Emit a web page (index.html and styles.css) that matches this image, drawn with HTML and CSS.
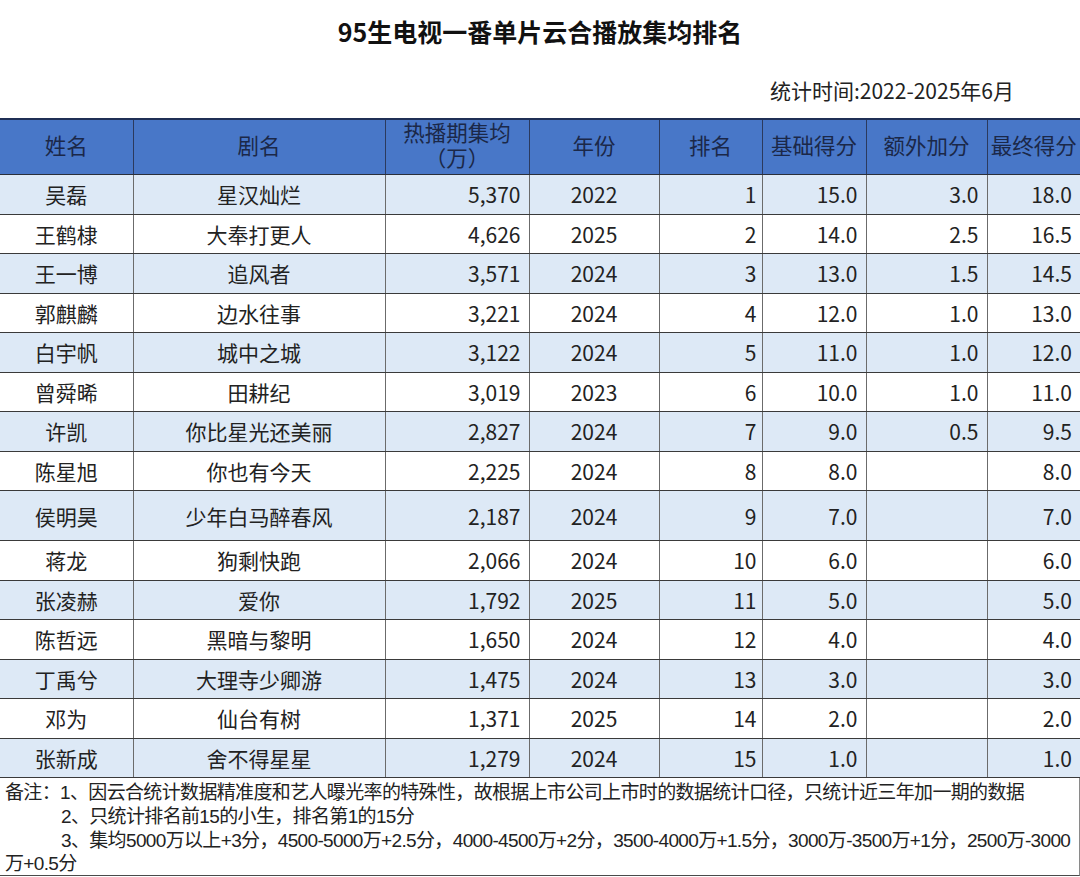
FILE: index.html
```html
<!DOCTYPE html>
<html lang="zh-CN">
<head>
<meta charset="utf-8">
<title>95生电视一番单片云合播放集均排名</title>
<link rel="stylesheet" href="styles.css">
</head>
<body>
<div class="page">
  <h1 class="title">95生电视一番单片云合播放集均排名</h1>
  <div class="period">统计时间:2022-2025年6月</div>
  <table class="rank">
    <colgroup>
      <col class="c-name"><col class="c-drama"><col class="c-avg"><col class="c-year">
      <col class="c-rank"><col class="c-base"><col class="c-extra"><col class="c-final">
    </colgroup>
    <thead>
      <tr>
        <th>姓名</th><th>剧名</th><th><span class="hl">热播期集均</span><span class="hl">（万）</span></th><th>年份</th>
        <th>排名</th><th>基础得分</th><th>额外加分</th><th>最终得分</th>
      </tr>
    </thead>
    <tbody>
      <tr class="alt"><td class="ctr">吴磊</td><td class="ctr">星汉灿烂</td><td class="num">5,370</td><td class="ctr">2022</td><td class="num rk">1</td><td class="num">15.0</td><td class="num">3.0</td><td class="num">18.0</td></tr>
      <tr><td class="ctr">王鹤棣</td><td class="ctr">大奉打更人</td><td class="num">4,626</td><td class="ctr">2025</td><td class="num rk">2</td><td class="num">14.0</td><td class="num">2.5</td><td class="num">16.5</td></tr>
      <tr class="alt"><td class="ctr">王一博</td><td class="ctr">追风者</td><td class="num">3,571</td><td class="ctr">2024</td><td class="num rk">3</td><td class="num">13.0</td><td class="num">1.5</td><td class="num">14.5</td></tr>
      <tr><td class="ctr">郭麒麟</td><td class="ctr">边水往事</td><td class="num">3,221</td><td class="ctr">2024</td><td class="num rk">4</td><td class="num">12.0</td><td class="num">1.0</td><td class="num">13.0</td></tr>
      <tr class="alt"><td class="ctr">白宇帆</td><td class="ctr">城中之城</td><td class="num">3,122</td><td class="ctr">2024</td><td class="num rk">5</td><td class="num">11.0</td><td class="num">1.0</td><td class="num">12.0</td></tr>
      <tr><td class="ctr">曾舜晞</td><td class="ctr">田耕纪</td><td class="num">3,019</td><td class="ctr">2023</td><td class="num rk">6</td><td class="num">10.0</td><td class="num">1.0</td><td class="num">11.0</td></tr>
      <tr class="alt"><td class="ctr">许凯</td><td class="ctr">你比星光还美丽</td><td class="num">2,827</td><td class="ctr">2024</td><td class="num rk">7</td><td class="num">9.0</td><td class="num">0.5</td><td class="num">9.5</td></tr>
      <tr><td class="ctr">陈星旭</td><td class="ctr">你也有今天</td><td class="num">2,225</td><td class="ctr">2024</td><td class="num rk">8</td><td class="num">8.0</td><td class="num"></td><td class="num">8.0</td></tr>
      <tr class="alt tall"><td class="ctr">侯明昊</td><td class="ctr">少年白马醉春风</td><td class="num">2,187</td><td class="ctr">2024</td><td class="num rk">9</td><td class="num">7.0</td><td class="num"></td><td class="num">7.0</td></tr>
      <tr><td class="ctr">蒋龙</td><td class="ctr">狗剩快跑</td><td class="num">2,066</td><td class="ctr">2024</td><td class="num rk">10</td><td class="num">6.0</td><td class="num"></td><td class="num">6.0</td></tr>
      <tr class="alt"><td class="ctr">张凌赫</td><td class="ctr">爱你</td><td class="num">1,792</td><td class="ctr">2025</td><td class="num rk">11</td><td class="num">5.0</td><td class="num"></td><td class="num">5.0</td></tr>
      <tr><td class="ctr">陈哲远</td><td class="ctr">黑暗与黎明</td><td class="num">1,650</td><td class="ctr">2024</td><td class="num rk">12</td><td class="num">4.0</td><td class="num"></td><td class="num">4.0</td></tr>
      <tr class="alt"><td class="ctr">丁禹兮</td><td class="ctr">大理寺少卿游</td><td class="num">1,475</td><td class="ctr">2024</td><td class="num rk">13</td><td class="num">3.0</td><td class="num"></td><td class="num">3.0</td></tr>
      <tr><td class="ctr">邓为</td><td class="ctr">仙台有树</td><td class="num">1,371</td><td class="ctr">2025</td><td class="num rk">14</td><td class="num">2.0</td><td class="num"></td><td class="num">2.0</td></tr>
      <tr class="alt"><td class="ctr">张新成</td><td class="ctr">舍不得星星</td><td class="num">1,279</td><td class="ctr">2024</td><td class="num rk">15</td><td class="num">1.0</td><td class="num"></td><td class="num">1.0</td></tr>
    </tbody>
  </table>
  <div class="notes">
    <p class="note-first">备注：1、因云合统计数据精准度和艺人曝光率的特殊性，故根据上市公司上市时的数据统计口径，只统计近三年加一期的数据</p>
    <p class="note-indent">2、只统计排名前15的小生，排名第1的15分</p>
    <p class="note-indent">3、集均5000万以上+3分，4500-5000万+2.5分，4000-4500万+2分，3500-4000万+1.5分，3000万-3500万+1分，2500万-3000</p>
    <p class="note-wrap">万+0.5分</p>
  </div>
</div>
</body>
</html>
```
FILE: styles.css
```css
html, body {
  margin: 0;
  padding: 0;
  background: #ffffff;
}

body {
  font-family: "Noto Sans CJK SC", "Liberation Sans", sans-serif;
  color: #1e1e1e;
}

.page {
  width: 1080px;
  height: 877px;
  overflow: hidden;
}

.title {
  margin: 0;
  height: 64px;
  line-height: 62px;
  text-align: center;
  font-size: 25px;
  font-weight: 700;
  color: #111111;
}

.period {
  height: 54px;
  line-height: 52px;
  text-align: right;
  padding-right: 66px;
  font-size: 21px;
  color: #222222;
}

.rank {
  width: 1080px;
  table-layout: fixed;
  border-collapse: collapse;
  font-size: 21px;
}

.c-name { width: 133px; }
.c-drama { width: 252px; }
.c-avg { width: 144px; }
.c-year { width: 130px; }
.c-rank { width: 103px; }
.c-base { width: 104px; }
.c-extra { width: 121px; }
.c-final { width: 93px; }

.rank th {
  background: #4877c8;
  color: #1b2848;
  font-family: "Liberation Sans", "Noto Sans CJK SC", sans-serif;
  font-weight: 400;
  font-size: 21.5px;
  line-height: 25px;
  height: 54px;
  padding: 0 2px;
  text-align: center;
  border-top: 2px solid #1f2f55;
  border-bottom: 1.5px solid #2a2f3a;
  border-left: 1.5px solid #2b3a5e;
  border-right: 1.5px solid #2b3a5e;
}

.hl {
  display: block;
}

.rank th:first-child { border-left: none; }
.rank th:last-child { border-right: none; }

.rank td {
  height: 38.5px;
  padding: 0 8px;
  line-height: 24px;
  border-top: 1.5px solid #3a3a3a;
  border-bottom: 1.5px solid #3a3a3a;
  border-left: 1.5px solid #6b6b6b;
  border-right: 1.5px solid #6b6b6b;
  color: #222222;
  white-space: nowrap;
}

.rank td:first-child { border-left: none; }
.rank td:last-child { border-right: none; }

.rank tr.alt td { background: #dde9f6; }
.rank tr.tall td { height: 49.2px; }

.ctr { text-align: center; }
.num { text-align: right; }
.rank td.rk { padding-right: 5px; }

.notes {
  border-bottom: 1.5px solid #4a4a4a;
  border-right: 1.5px solid #8a8a8a;
  height: 98px;
  box-sizing: border-box;
  padding: 3px 0 0 5px;
  font-family: "Liberation Sans", "Noto Sans CJK SC", sans-serif;
  font-size: 19px;
  letter-spacing: -0.65px;
  line-height: 24px;
  color: #222222;
}

.notes p {
  margin: 0;
  white-space: nowrap;
}

.note-indent {
  padding-left: 56px;
}

.note-wrap {
  line-height: 22px;
}
```
